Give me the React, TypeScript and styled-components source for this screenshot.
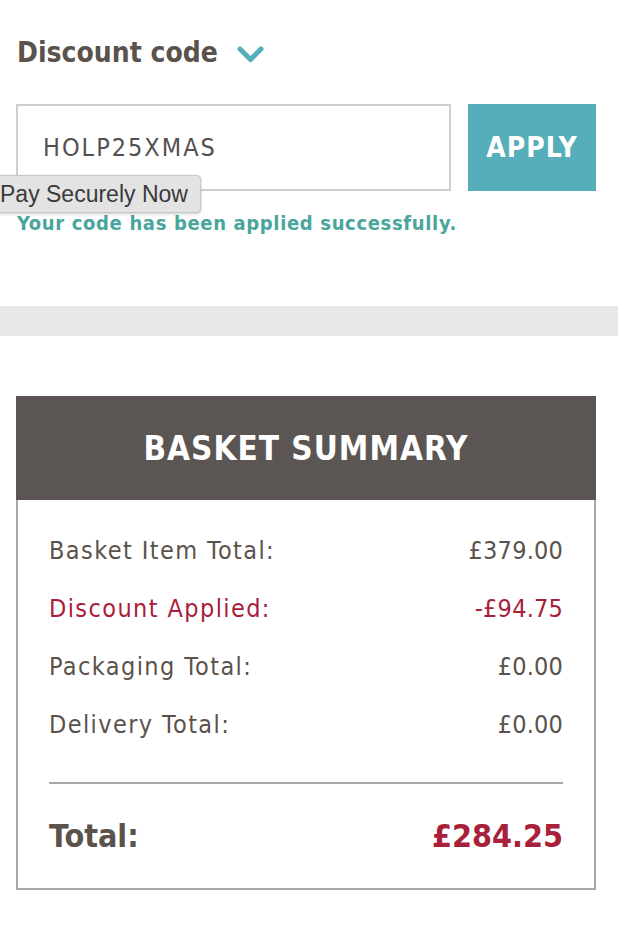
import React from 'react';
import styled, { createGlobalStyle } from 'styled-components';

const GlobalStyle = createGlobalStyle`
  html, body {
    margin: 0;
    padding: 0;
    background: #fff;
  }
  body {
    font-family: 'DejaVu Sans Condensed', 'DejaVu Sans', sans-serif;
    color: #5b524c;
  }
`;

const Page = styled.div`
  width: 618px;
  overflow: hidden;
`;

const DiscountSection = styled.section`
  padding: 33px 22px 0 16px;
  height: 273px;
  box-sizing: border-box;
`;

const Heading = styled.h2`
  display: flex;
  align-items: center;
  gap: 18px;
  margin: 0 0 0 1px;
  font-size: 28px;
  font-weight: bold;
  line-height: 40px;
  color: #5b524c;

  svg {
    margin-top: 4px;
  }
`;

const Form = styled.div`
  display: flex;
  gap: 17px;
  margin-top: 31px;
`;

const FieldWrap = styled.div`
  position: relative;
  flex: 1;
`;

const CodeInput = styled.input`
  width: 100%;
  height: 87px;
  box-sizing: border-box;
  border: 2px solid #cfcfcf;
  padding: 0 25px;
  font-family: inherit;
  font-size: 25px;
  letter-spacing: 2px;
  color: #555050;
  outline: none;
`;

const ApplyButton = styled.button`
  width: 128px;
  height: 87px;
  border: 0;
  background: #55aeb9;
  color: #fff;
  font-family: inherit;
  font-size: 28px;
  font-weight: bold;
  letter-spacing: 1px;
`;

const Tooltip = styled.div`
  position: absolute;
  left: -29px;
  top: 71px;
  padding: 5px 12px;
  background: #e3e3e3;
  border: 1px solid #c8c8c8;
  border-radius: 4px;
  box-shadow: 0 1px 3px rgba(0, 0, 0, 0.2);
  font-family: 'Liberation Sans', Arial, sans-serif;
  font-size: 23px;
  line-height: 26px;
  color: #3a3a3a;
  white-space: nowrap;
`;

const Success = styled.p`
  margin: 20px 0 0 1px;
  font-size: 20px;
  font-weight: bold;
  letter-spacing: 0.65px;
  color: #4aa59c;
`;

const Band = styled.div`
  height: 30px;
  margin-top: 33px;
  background: #e9e8e6;
`;

const Summary = styled.section`
  margin: 60px 22px 0 16px;
  border: 2px solid #a8a8a8;
  border-top: 0;
`;

const SummaryHeader = styled.h2`
  margin: 0 -2px;
  height: 104px;
  display: flex;
  align-items: center;
  justify-content: center;
  background: #5b5653;
  color: #fff;
  font-size: 33px;
  font-weight: bold;
  letter-spacing: 1px;
`;

const Rows = styled.div`
  padding: 21px 31px 0;
`;

const Row = styled.div<{ $tone?: 'red' }>`
  display: flex;
  justify-content: space-between;
  height: 58px;
  align-items: center;
  font-size: 25px;
  color: ${(p) => (p.$tone === 'red' ? '#a8203a' : '#5b524c')};
`;

const Label = styled.span`
  letter-spacing: 1.4px;
`;

const Amount = styled.span`
  letter-spacing: 0.2px;
`;

const Divider = styled.hr`
  margin: 29px 0 0;
  border: 0;
  border-top: 2px solid #a8a8a8;
`;

const TotalRow = styled.div`
  display: flex;
  justify-content: space-between;
  align-items: center;
  height: 104px;
  font-size: 32px;
  font-weight: bold;
`;

const TotalValue = styled.span`
  color: #a8203a;
`;

const Chevron = () => (
  <svg width="29" height="20" viewBox="0 0 29 20">
    <path
      d="M4 4 L14.5 14.5 L25 4"
      fill="none"
      stroke="#55aeb9"
      strokeWidth="5"
      strokeLinecap="round"
      strokeLinejoin="round"
    />
  </svg>
);

const lines = [
  { label: 'Basket Item Total:', value: '£379.00' },
  { label: 'Discount Applied:', value: '-£94.75', tone: 'red' as const },
  { label: 'Packaging Total:', value: '£0.00' },
  { label: 'Delivery Total:', value: '£0.00' },
];

export default function App() {
  return (
    <Page>
      <GlobalStyle />
      <DiscountSection>
        <Heading>
          Discount code
          <Chevron />
        </Heading>
        <Form>
          <FieldWrap>
            <CodeInput defaultValue="HOLP25XMAS" />
            <Tooltip>Pay Securely Now</Tooltip>
          </FieldWrap>
          <ApplyButton>APPLY</ApplyButton>
        </Form>
        <Success>Your code has been applied successfully.</Success>
      </DiscountSection>
      <Band />
      <Summary>
        <SummaryHeader>BASKET SUMMARY</SummaryHeader>
        <Rows>
          {lines.map((l) => (
            <Row key={l.label} $tone={l.tone}>
              <Label>{l.label}</Label>
              <Amount>{l.value}</Amount>
            </Row>
          ))}
          <Divider />
          <TotalRow>
            <span>Total:</span>
            <TotalValue>£284.25</TotalValue>
          </TotalRow>
        </Rows>
      </Summary>
    </Page>
  );
}
